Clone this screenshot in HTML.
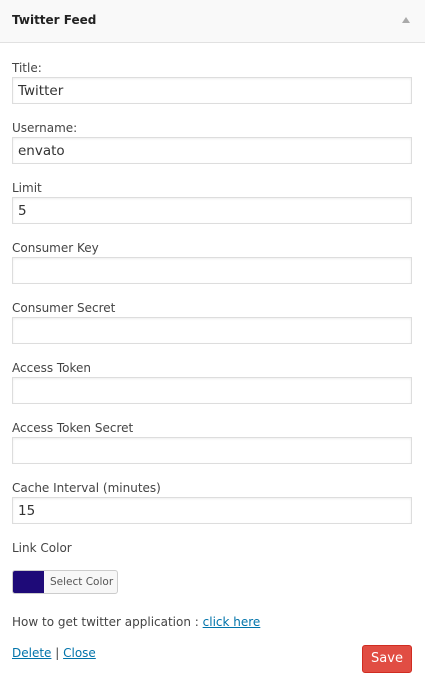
<!DOCTYPE html>
<html><head><style>
*{margin:0;padding:0;box-sizing:border-box}
body{width:425px;height:685px;background:#fff;font-family:"DejaVu Sans",sans-serif;font-size:12px;color:#444;position:relative;overflow:hidden}
.hd{position:absolute;left:0;top:0;width:425px;height:43px;background:#f9f9f9;border-bottom:1px solid #e1e1e1}
.hd b{position:absolute;left:12px;top:13px;font-size:12px;color:#222}
.tri{position:absolute;left:402px;top:17px;width:0;height:0;border-left:4px solid transparent;border-right:4px solid transparent;border-bottom:6px solid #aaa}
.l{position:absolute;left:12px}
.in{position:absolute;left:12px;width:400px;height:27px;border:1px solid #ddd;box-shadow:inset 0 1px 2px rgba(0,0,0,.07);padding:5px 5px;font-size:13.5px;color:#333}
a{color:#0073aa;text-decoration:underline}
</style></head><body>
<div class="hd"><b>Twitter Feed</b><div class="tri"></div></div>
<div class="l" style="top:61px">Title:</div><div class="in" style="top:77px">Twitter</div>
<div class="l" style="top:121px">Username:</div><div class="in" style="top:137px">envato</div>
<div class="l" style="top:181px">Limit</div><div class="in" style="top:197px">5</div>
<div class="l" style="top:241px">Consumer Key</div><div class="in" style="top:257px"></div>
<div class="l" style="top:301px">Consumer Secret</div><div class="in" style="top:317px"></div>
<div class="l" style="top:361px">Access Token</div><div class="in" style="top:377px"></div>
<div class="l" style="top:421px">Access Token Secret</div><div class="in" style="top:437px"></div>
<div class="l" style="top:481px">Cache Interval (minutes)</div><div class="in" style="top:497px">15</div>
<div class="l" style="top:541px">Link Color</div>
<div style="position:absolute;left:12px;top:570px;width:106px;height:24px;border:1px solid #ccc;border-radius:3px;background:#f7f7f7;overflow:hidden">
<div style="position:absolute;left:0;top:0;width:31px;height:24px;background:#1e0a78"></div>
<div style="position:absolute;left:37px;top:5px;font-size:10.5px;color:#555">Select Color</div></div>
<div class="l" style="top:615px">How to get twitter application : <a>click here</a></div>
<div class="l" style="top:646px"><a>Delete</a> | <a>Close</a></div>
<div style="position:absolute;left:362px;top:645px;width:50px;height:28px;background:#e14d43;border:1px solid #d02c21;border-radius:3px;color:#fff;font-size:13px;text-align:center;line-height:26px">Save</div>
</body></html>
